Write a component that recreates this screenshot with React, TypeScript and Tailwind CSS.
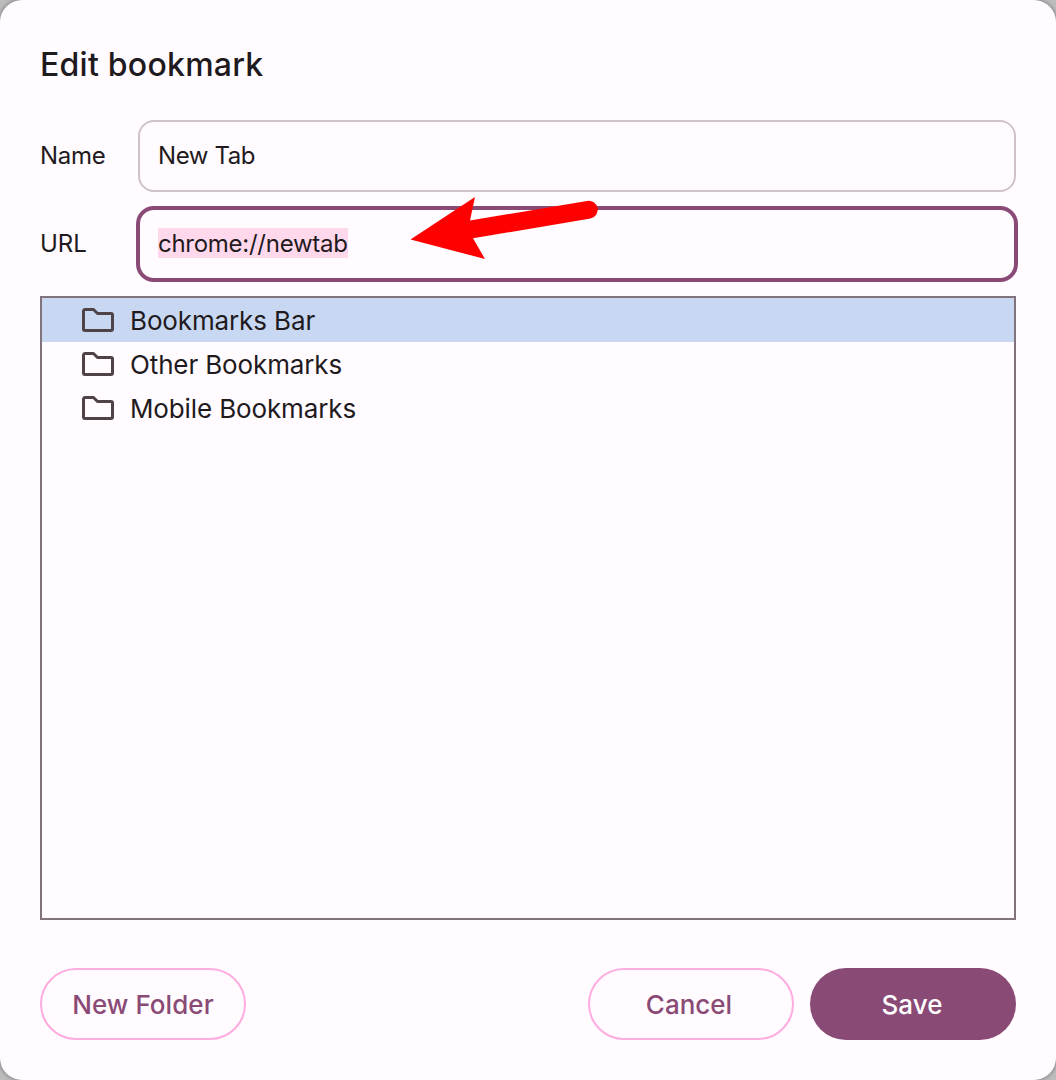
const folders = ["Bookmarks Bar", "Other Bookmarks", "Mobile Bookmarks"];

function Folder() {
  return (
    <svg width="32" height="24" viewBox="0 0 32 24" fill="none" stroke="#4f4348" strokeWidth="3" strokeLinejoin="round">
      <path d="M1.5 3a1.500 1.500 0 0 1 1.500-1.500h8.500l4 4h13.500a1.500 1.500 0 0 1 1.500 1.500v14a1.500 1.500 0 0 1-1.500 1.500h-26a1.500 1.500 0 0 1-1.500-1.500z" />
    </svg>
  );
}

export default function App() {
  return (
    <div className="h-[1080px] w-[1056px] bg-[#bdbcbd] font-[Inter,sans-serif] text-[#1f1a1d]">
      <main className="relative flex h-full flex-col rounded-[22px] bg-[#fffbff] px-10 pt-[44px] pb-10 shadow-[0_0_4px_rgba(0,0,0,0.45)]">
        <h1 className="h-[76px] text-[32px] leading-[42px] font-medium tracking-[0.25px] whitespace-nowrap">Edit bookmark</h1>
        <div className="flex h-[72px] items-center text-[24px] tracking-[-0.3px]">
          <label className="w-[98px]">Name</label>
          <div className="flex h-[72px] flex-1 items-center rounded-[16px] border-2 border-[#cfc3c8] px-[18px] tracking-[-0.4px]">New Tab</div>
        </div>
        <div className="mt-[14px] flex h-[76px] items-center text-[24px]">
          <label className="w-[96px]">URL</label>
          <div className="-mr-[2px] flex h-[76px] flex-1 items-center rounded-[18px] border-4 border-[#8a4a76] px-[18px]">
            <span className="mb-[2px] h-[30px] bg-[#ffd8ec] leading-[31px] tracking-[-0.27px]">chrome://newtab</span>
          </div>
        </div>
        <ul className="mt-[14px] h-[624px] border-2 border-[#81737a]">
          {folders.map((f, i) => (
            <li key={f} className={`flex h-[44px] items-center gap-4 pl-10 text-[26px] tracking-[-0.13px] ${i === 0 ? "bg-[#c8d8f3]" : ""}`}>
              <Folder />
              <span>{f}</span>
            </li>
          ))}
        </ul>
        <div className="mt-12 flex h-[72px] gap-4 text-[26px] font-medium text-[#8a4a76]">
          <button className="mr-auto w-[206px] rounded-full border-2 border-[#ffade0] tracking-[0.05px]">New Folder</button>
          <button className="w-[206px] rounded-full border-2 border-[#ffade0] pr-[4px]">Cancel</button>
          <button className="w-[206px] rounded-full bg-[#8a4a76] pr-[2px] text-white">Save</button>
        </div>
        <svg className="absolute top-[190px] left-[400px]" width="210" height="80" viewBox="400 190 210 80" fill="#ff0000">
          <path d="M410.500 239.500L475 197L470 220.500L587 201A8.900 8.900 0 0 1 590.500 218.500L473 238.300L485 259Z" />
        </svg>
      </main>
    </div>
  );
}
